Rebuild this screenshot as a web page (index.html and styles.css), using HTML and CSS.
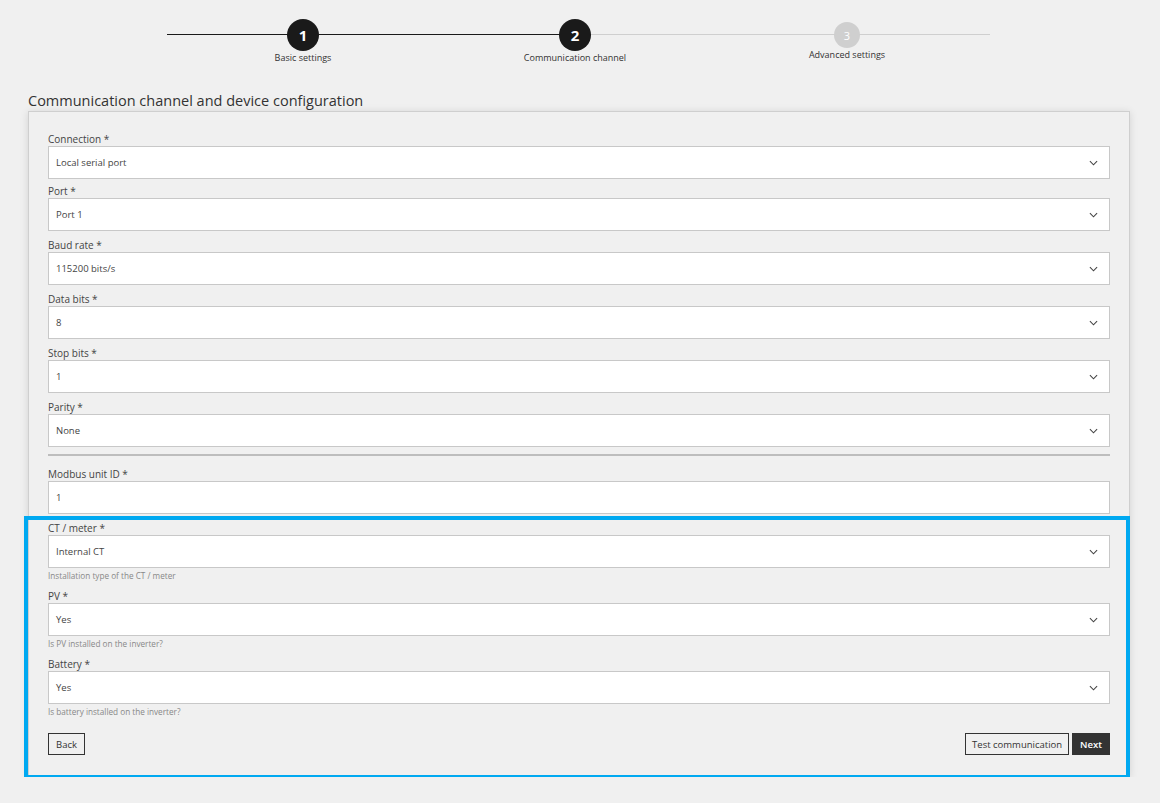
FILE: index.html
```html
<!DOCTYPE html>
<html>
<head>
<meta charset="utf-8">
<link rel="stylesheet" href="styles.css">
</head>
<body>
<div class="stepper">
  <div class="step done">
    <div class="line"></div>
    <div class="circle">1</div>
    <div class="step-label">Basic settings</div>
  </div>
  <div class="step active">
    <div class="line half"></div>
    <div class="circle">2</div>
    <div class="step-label">Communication channel</div>
  </div>
  <div class="step todo">
    <div class="line"></div>
    <div class="circle">3</div>
    <div class="step-label">Advanced settings</div>
  </div>
</div>

<h2 class="title">Communication channel and device configuration</h2>

<div class="card">
  <div class="field first">
    <label class="label">Connection *</label>
    <div class="select"><span>Local serial port</span><svg class="chev" viewBox="0 0 10 6"><polyline points="1,1 5,5 9,1"/></svg></div>
  </div>
  <div class="field">
    <label class="label">Port *</label>
    <div class="select"><span>Port 1</span><svg class="chev" viewBox="0 0 10 6"><polyline points="1,1 5,5 9,1"/></svg></div>
  </div>
  <div class="field">
    <label class="label">Baud rate *</label>
    <div class="select"><span>115200 bits/s</span><svg class="chev" viewBox="0 0 10 6"><polyline points="1,1 5,5 9,1"/></svg></div>
  </div>
  <div class="field">
    <label class="label">Data bits *</label>
    <div class="select"><span>8</span><svg class="chev" viewBox="0 0 10 6"><polyline points="1,1 5,5 9,1"/></svg></div>
  </div>
  <div class="field">
    <label class="label">Stop bits *</label>
    <div class="select"><span>1</span><svg class="chev" viewBox="0 0 10 6"><polyline points="1,1 5,5 9,1"/></svg></div>
  </div>
  <div class="field">
    <label class="label">Parity *</label>
    <div class="select"><span>None</span><svg class="chev" viewBox="0 0 10 6"><polyline points="1,1 5,5 9,1"/></svg></div>
  </div>
  <div class="sep"></div>
  <div class="field">
    <label class="label">Modbus unit ID *</label>
    <div class="select input"><span>1</span></div>
  </div>
  <div class="field">
    <label class="label">CT / meter *</label>
    <div class="select"><span>Internal CT</span><svg class="chev" viewBox="0 0 10 6"><polyline points="1,1 5,5 9,1"/></svg></div>
    <div class="help">Installation type of the CT / meter</div>
  </div>
  <div class="field">
    <label class="label">PV *</label>
    <div class="select"><span>Yes</span><svg class="chev" viewBox="0 0 10 6"><polyline points="1,1 5,5 9,1"/></svg></div>
    <div class="help">Is PV installed on the inverter?</div>
  </div>
  <div class="field">
    <label class="label">Battery *</label>
    <div class="select"><span>Yes</span><svg class="chev" viewBox="0 0 10 6"><polyline points="1,1 5,5 9,1"/></svg></div>
    <div class="help">Is battery installed on the inverter?</div>
  </div>
  <div class="actions">
    <button class="btn">Back</button>
    <div class="right">
      <button class="btn test">Test communication</button>
      <button class="btn primary">Next</button>
    </div>
  </div>
  <div class="highlight"></div>
</div>
</body>
</html>
```

FILE: styles.css
```css
* { box-sizing: border-box; }
html, body {
  margin: 0;
  padding: 0;
  background: #f0f0f0;
  font-family: "Open Sans", "Noto Sans", sans-serif;
  color: #333;
}
.stepper {
  display: flex;
  margin: 19px 0 0 167px;
  width: 816px;
}
.step {
  position: relative;
  width: 272px;
  display: flex;
  flex-direction: column;
  align-items: center;
}
.line {
  position: absolute;
  left: 0;
  right: 0;
  top: 15px;
  height: 1px;
  background: #1a1a1a;
}
.step.active .line {
  background: linear-gradient(to right, #1a1a1a 0, #1a1a1a 51%, #cfcfcf 51%);
}
.step.todo .line {
  background: #cfcfcf;
  right: -7px;
}
.circle {
  position: relative;
  width: 32px;
  height: 32px;
  border-radius: 50%;
  background: #1a1a1a;
  color: #fff;
  font-weight: 700;
  font-size: 15px;
  display: flex;
  align-items: center;
  justify-content: center;
}
.step.todo .circle {
  width: 26px;
  height: 26px;
  margin-top: 3px;
  background: #cfcfcf;
  font-size: 11px;
  font-weight: 400;
}
.step-label {
  font-size: 9px;
  line-height: 12px;
  margin-top: 1px;
  color: #333;
}
.step.todo .step-label { margin-top: 1px; }
.title {
  margin: 27px 0 0 28px;
  font-size: 14.5px;
  font-weight: 400;
  line-height: 20px;
  color: #333;
}
.card {
  position: relative;
  margin: 0 0 0 28px;
  width: 1102px;
  border: 1px solid #cfcfcf;
  background: #f0f0f0;
  box-shadow: 0 1px 8px rgba(0,0,0,0.12);
  padding: 20px 19px 21px 19px;
}
.field { margin-bottom: 7px; }
.field.first { margin-bottom: 5px; }
.label {
  display: block;
  font-size: 10px;
  line-height: 14px;
  color: #444;
}
.select {
  height: 33px;
  background: #fff;
  border: 1px solid #c8c8c8;
  display: flex;
  align-items: center;
  justify-content: space-between;
  padding: 0 11px 0 7px;
  font-size: 9.5px;
  color: #444;
}
.chev {
  width: 9px;
  height: 6px;
  fill: none;
  stroke: #444;
  stroke-width: 1.2;
}
.help {
  margin-top: 2px;
  font-size: 8.2px;
  line-height: 12px;
  color: #888;
}
.sep {
  height: 2px;
  background: #bdbdbd;
  margin: 2px 0 11px;
}
.actions {
  display: flex;
  justify-content: space-between;
  margin-top: 15px;
}
.right { display: flex; gap: 3px; }
.btn {
  height: 22px;
  padding: 0 7px;
  border: 1px solid #333;
  background: transparent;
  color: #333;
  font-family: inherit;
  font-size: 9.5px;
  cursor: pointer;
}
.btn.test { padding: 0 6px; }
.btn.primary {
  background: #333;
  color: #fff;
  font-weight: 600;
}
.highlight {
  position: absolute;
  left: -5px;
  right: -1px;
  top: 404px;
  bottom: -3px;
  border: 4px solid #00a9f1;
  pointer-events: none;
}
```
